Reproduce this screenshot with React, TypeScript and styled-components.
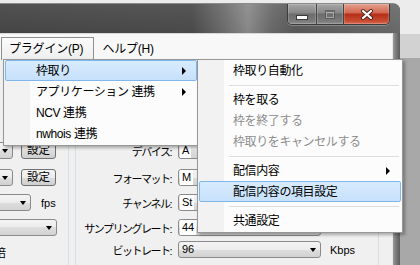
import React from "react";
import styled, { createGlobalStyle } from "styled-components";

const GlobalStyle = createGlobalStyle`
    html, body {
        margin: 0;
        padding: 0;
        width: 420px;
        height: 265px;
        overflow: hidden;
        background: #a8a8a8;
    }
    #root {
        width: 420px;
        height: 265px;
    }
`;

const Screen = styled.div`
    position: relative;
    width: 420px;
    height: 265px;
    overflow: hidden;
    display: flex;
    flex-direction: column;
    background: linear-gradient(#ececec 0 34px, #d2d2d2 34px 58px, #a8a8a8 58px);
    font-family: "Liberation Sans", "Noto Sans CJK JP", sans-serif;
    color: #000;
`;

const Window = styled.div`
    width: 400px;
    flex: 1;
    margin-top: 3px;
    display: flex;
    flex-direction: column;
    border-top: 1px solid #8a8a8a;
    border-top-right-radius: 7px;
    overflow: hidden;
    background: linear-gradient(90deg, #5a5a5a, #7a7a7a 60%, #6a6a6a);
`;

const TitleBar = styled.div`
    height: 29px;
    flex-shrink: 0;
    display: flex;
    justify-content: flex-end;
    align-items: flex-start;
    padding-right: 10px;
    background:
        linear-gradient(rgba(255, 255, 255, 0.06), rgba(0, 0, 0, 0.04)),
        linear-gradient(90deg, #474747 0%, #4c4c4c 48%, #6e6e6e 56%, #8c8c8c 62%, #6a6a6a 68%, #5a5a5a 74%, #6c6c6c 100%);
`;

const CaptionGroup = styled.div`
    display: flex;
    height: 20px;
    border: 1px solid #3c3c3c;
    border-top: 0;
    border-radius: 0 0 5px 5px;
    overflow: hidden;
    box-shadow: 0 1px 0 rgba(255, 255, 255, 0.25);
`;

const CaptionButton = styled.div<{ $width: number; $close?: boolean }>`
    width: ${(p) => p.$width}px;
    display: flex;
    align-items: center;
    justify-content: center;
    border-right: 1px solid #444;
    box-shadow: inset 0 0 0 1px rgba(255, 255, 255, 0.18);
    background: ${(p) =>
        p.$close
            ? "linear-gradient(#e4a08f 0%, #d2664f 45%, #b52e18 50%, #c84a31 85%, #d9705a 100%)"
            : "linear-gradient(#a7a7a7 0%, #868686 45%, #6c6c6c 50%, #7a7a7a 85%, #8e8e8e 100%)"};
    &:last-child {
        border-right: 0;
    }
`;

const MinGlyph = styled.div`
    width: 10px;
    height: 3px;
    margin-top: 7px;
    background: #fff;
    border: 1px solid #3a3a3a;
`;

const MaxGlyph = styled.div`
    width: 8px;
    height: 6px;
    border: 1px solid rgba(60, 60, 60, 0.45);
    border-top-width: 2px;
    box-shadow: inset 0 0 0 1px rgba(255, 255, 255, 0.35);
`;

const WindowBody = styled.div`
    flex: 1;
    display: flex;
`;

const Client = styled.div`
    width: 392px;
    display: flex;
    flex-direction: column;
    background: #f0f0f0;
`;

const RightFrame = styled.div`
    flex: 1;
    background: linear-gradient(90deg, #9a9a9a, #7c7c7c 40%, #5c5c5c);
    border-left: 1px solid #e8e8e8;
`;

const MenuBar = styled.div`
    height: 27px;
    flex-shrink: 0;
    display: flex;
    align-items: flex-end;
    padding-left: 1px;
    background: #f8f8f8;
    border-top: 1px solid #d8d8d8;
    box-sizing: border-box;
`;

const MenuBarItem = styled.div<{ $open?: boolean }>`
    height: 23px;
    line-height: 22px;
    box-sizing: border-box;
    padding: 0 10px 0 7px;
    font-size: 12px;
    letter-spacing: -0.2px;
    border: 1px solid ${(p) => (p.$open ? "#8e8f8f" : "transparent")};
    border-bottom: 0;
    background: ${(p) => (p.$open ? "linear-gradient(#fbfbfb, #eeeeee)" : "transparent")};
`;

const FormArea = styled.div`
    flex: 1;
    display: flex;
    align-items: stretch;
`;

const Group = styled.div<{ $width: number; $shift: number }>`
    width: ${(p) => p.$width}px;
    margin-left: ${(p) => p.$shift}px;
    margin-top: 20px;
    padding-top: 62px;
    box-sizing: border-box;
    border-left: 1px solid #d5dfe5;
    border-right: 1px solid #d5dfe5;
    display: flex;
    flex-direction: column;
`;

const Row = styled.div<{ $gap: number }>`
    display: flex;
    align-items: center;
    height: 17px;
    margin-top: ${(p) => p.$gap}px;
`;

const Combo = styled.div<{ $width: number }>`
    position: relative;
    width: ${(p) => p.$width}px;
    height: 17px;
    flex-shrink: 0;
    box-sizing: border-box;
    border: 1px solid #8a8a8a;
    border-radius: 3px;
    background: linear-gradient(#f4f4f4 0%, #ececec 50%, #dedede 50%, #d2d2d2 100%);
    font-size: 11px;
    line-height: 15px;
    padding-left: 3px;
    &::after {
        content: "";
        position: absolute;
        right: 4px;
        top: 6px;
        border-left: 3.5px solid transparent;
        border-right: 3.5px solid transparent;
        border-top: 4px solid #000;
    }
`;

const FieldValue = styled.span`
    display: inline-block;
    background: #fff;
    padding: 0 2px;
    margin-left: -2px;
`;

const Button = styled.div<{ $ml: number }>`
    width: 35px;
    height: 17px;
    margin-left: ${(p) => p.$ml}px;
    box-sizing: border-box;
    border: 1px solid #707070;
    border-radius: 3px;
    background: linear-gradient(#f4f4f4 0%, #ececec 50%, #dddddd 50%, #cfcfcf 100%);
    font-size: 11.5px;
    line-height: 15px;
    text-align: center;
`;

const Unit = styled.span<{ $ml: number }>`
    margin-left: ${(p) => p.$ml}px;
    font-size: 11px;
`;

const Label = styled.span`
    width: 103px;
    flex-shrink: 0;
    padding-right: 7px;
    box-sizing: border-box;
    text-align: right;
    font-size: 11px;
    letter-spacing: -1.5px;
    white-space: nowrap;
    margin-left: -1px;
`;

const Stray = styled.span<{ $ml: number }>`
    margin-left: ${(p) => p.$ml}px;
    font-size: 11px;
`;

const Menu = styled.div<{ $left: number; $width: number; $indent: number }>`
    position: absolute;
    top: 59px;
    left: ${(p) => p.$left}px;
    width: ${(p) => p.$width}px;
    box-sizing: border-box;
    border: 1px solid #979797;
    padding: 0 1px 1px;
    background: linear-gradient(90deg, #f2f2f2 0 26px, #fcfcfc 26px);
    box-shadow: 2px 2px 3px rgba(0, 0, 0, 0.3);
    --indent: ${(p) => p.$indent}px;
`;

const MenuItem = styled.div<{ $active?: boolean; $disabled?: boolean }>`
    height: 21px;
    line-height: 20px;
    box-sizing: border-box;
    display: flex;
    align-items: center;
    justify-content: space-between;
    padding: 0 10px 0 var(--indent);
    font-size: 12px;
    letter-spacing: -0.4px;
    white-space: nowrap;
    color: ${(p) => (p.$disabled ? "#8d8d8d" : "#000")};
    border: 1px solid ${(p) => (p.$active ? "#7fb6ec" : "transparent")};
    border-radius: 2px;
    background: ${(p) => (p.$active ? "linear-gradient(#d7ebfd, #c7e1fb)" : "transparent")};
`;

const SubArrow = styled.span`
    width: 0;
    height: 0;
    border-top: 4px solid transparent;
    border-bottom: 4px solid transparent;
    border-left: 4px solid #000;
`;

const Separator = styled.div`
    height: 8px;
    margin: 0 2px 0 30px;
    position: relative;
    &::after {
        content: "";
        position: absolute;
        left: 0;
        right: 0;
        top: 4px;
        height: 1px;
        background: #dcdcdc;
        border-bottom: 1px solid #fff;
    }
`;

const CloseGlyph = () => (
    <svg width="14" height="11" viewBox="0 0 14 11">
        <path d="M3 2 L11 9 M11 2 L3 9" stroke="#4a2a24" strokeWidth="4" strokeLinecap="round" />
        <path d="M3 2 L11 9 M11 2 L3 9" stroke="#fff" strokeWidth="2.2" strokeLinecap="round" />
    </svg>
);

export default function App() {
    return (
        <>
            <GlobalStyle />
            <Screen>
                <Window>
                    <TitleBar>
                        <CaptionGroup>
                            <CaptionButton $width={28}>
                                <MinGlyph />
                            </CaptionButton>
                            <CaptionButton $width={26}>
                                <MaxGlyph />
                            </CaptionButton>
                            <CaptionButton $width={45} $close>
                                <CloseGlyph />
                            </CaptionButton>
                        </CaptionGroup>
                    </TitleBar>
                    <WindowBody>
                        <Client>
                            <MenuBar>
                                <MenuBarItem $open>プラグイン(P)</MenuBarItem>
                                <MenuBarItem>ヘルプ(H)</MenuBarItem>
                            </MenuBar>
                            <FormArea>
                                <Group $width={129} $shift={-60}>
                                    <Row $gap={0}>
                                        <Combo $width={72} />
                                        <Button $ml={8}>設定</Button>
                                    </Row>
                                    <Row $gap={10}>
                                        <Combo $width={72} />
                                        <Button $ml={8}>設定</Button>
                                    </Row>
                                    <Row $gap={8}>
                                        <Combo $width={90} />
                                        <Unit $ml={10}>fps</Unit>
                                    </Row>
                                    <Row $gap={8}>
                                        <Combo $width={116} />
                                    </Row>
                                    <Row $gap={7}>
                                        <Stray $ml={54}>倍</Stray>
                                    </Row>
                                </Group>
                                <Group $width={304} $shift={6}>
                                    <Row $gap={0}>
                                        <Label>デバイス:</Label>
                                        <Combo $width={143}>
                                            <FieldValue>A</FieldValue>
                                        </Combo>
                                    </Row>
                                    <Row $gap={10}>
                                        <Label>フォーマット:</Label>
                                        <Combo $width={143}>
                                            <FieldValue>M</FieldValue>
                                        </Combo>
                                    </Row>
                                    <Row $gap={8}>
                                        <Label>チャンネル:</Label>
                                        <Combo $width={143}>
                                            <FieldValue>St</FieldValue>
                                        </Combo>
                                    </Row>
                                    <Row $gap={8}>
                                        <Label>サンプリングレート:</Label>
                                        <Combo $width={143}>
                                            <FieldValue>44</FieldValue>
                                        </Combo>
                                    </Row>
                                    <Row $gap={5}>
                                        <Label>ビットレート:</Label>
                                        <Combo $width={143}>96</Combo>
                                        <Unit $ml={9}>Kbps</Unit>
                                    </Row>
                                </Group>
                            </FormArea>
                        </Client>
                        <RightFrame />
                    </WindowBody>
                </Window>

                <Menu $left={3} $width={196} $indent={30}>
                    <MenuItem $active>
                        枠取り
                        <SubArrow />
                    </MenuItem>
                    <MenuItem>
                        アプリケーション 連携
                        <SubArrow />
                    </MenuItem>
                    <MenuItem>NCV 連携</MenuItem>
                    <MenuItem>nwhois 連携</MenuItem>
                </Menu>

                <Menu $left={197} $width={206} $indent={33}>
                    <MenuItem>枠取り自動化</MenuItem>
                    <Separator />
                    <MenuItem>枠を取る</MenuItem>
                    <MenuItem $disabled>枠を終了する</MenuItem>
                    <MenuItem $disabled>枠取りをキャンセルする</MenuItem>
                    <Separator />
                    <MenuItem>
                        配信内容
                        <SubArrow />
                    </MenuItem>
                    <MenuItem $active>配信内容の項目設定</MenuItem>
                    <Separator />
                    <MenuItem>共通設定</MenuItem>
                </Menu>
            </Screen>
        </>
    );
}
